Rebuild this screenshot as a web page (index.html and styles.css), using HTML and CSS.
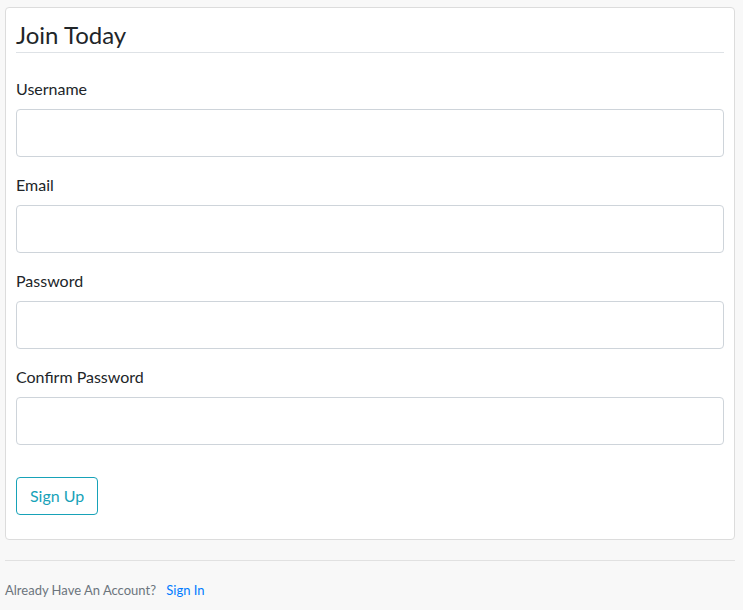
FILE: index.html
```html
<!DOCTYPE html>
<html lang="en">
<head>
<meta charset="utf-8">
<title>Join Today</title>
<link rel="stylesheet" href="styles.css">
</head>
<body>
<main class="page">
  <section class="card">
    <form class="form">
      <h1 class="legend">Join Today</h1>
      <div class="group">
        <label class="label" for="u">Username</label>
        <input class="input" id="u" type="text">
      </div>
      <div class="group">
        <label class="label" for="e">Email</label>
        <input class="input" id="e" type="email">
      </div>
      <div class="group">
        <label class="label" for="p">Password</label>
        <input class="input" id="p" type="password">
      </div>
      <div class="group">
        <label class="label" for="c">Confirm Password</label>
        <input class="input" id="c" type="password">
      </div>
      <div class="actions">
        <button class="btn" type="button">Sign Up</button>
      </div>
    </form>
  </section>
  <footer class="footer">
    <span class="muted">Already Have An Account?</span>
    <a class="link" href="#">Sign In</a>
  </footer>
</main>
</body>
</html>
```
FILE: styles.css
```css
* { box-sizing: border-box; }
html, body { margin: 0; padding: 0; }
body {
  background: #f8f8f8;
  font-family: "Lato", "Noto Sans", sans-serif;
  color: #212529;
  font-size: 16px;
  line-height: 1.5;
}
.page {
  padding: 7px 8px 0 5px;
}
.card {
  background: #fff;
  border: 1px solid #dcdcdc;
  border-radius: 4px;
  padding: 10px 10px 24px 10px;
}
.legend {
  margin: 0 0 24px 0;
  font-size: 24px;
  font-weight: 400;
  line-height: 34px;
  padding-top: 0;
  border-bottom: 1px solid #dee2e6;
}
.group { margin-bottom: 16px; }
.label {
  display: block;
  margin-bottom: 8px;
  font-size: 16px;
  line-height: 24px;
}
.input {
  display: block;
  width: 100%;
  height: 48px;
  border: 1px solid #ced4da;
  border-radius: 4px;
  background: #fff;
  font: inherit;
  padding: 8px 16px;
}
.actions { padding-top: 16px; }
.btn {
  font: inherit;
  font-size: 16px;
  line-height: 24px;
  color: #17a2b8;
  background: transparent;
  border: 1px solid #17a2b8;
  border-radius: 4px;
  padding: 6px 13px;
}
.footer {
  margin-top: 20px;
  border-top: 1px solid #e1e1e1;
  padding-top: 19px;
  font-size: 13px;
  line-height: 20px;
}
.muted { color: #6c757d; }
.link { color: #007bff; text-decoration: none; margin-left: 7px; }
```
